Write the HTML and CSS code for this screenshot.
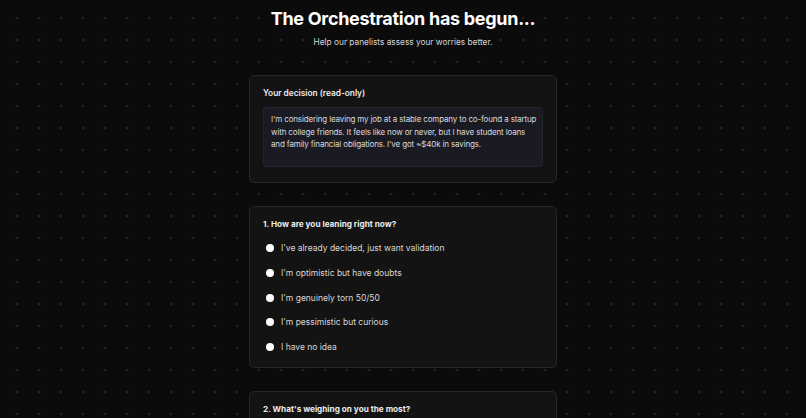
FILE: index.html
```html
<!DOCTYPE html>
<html lang="en">
<head>
<meta charset="utf-8">
<title>The Orchestration has begun…</title>
<link rel="stylesheet" href="styles.css">
</head>
<body>
<main class="page">
  <header class="hero">
    <h1 class="title">The Orchestration has begun...</h1>
    <p class="subtitle">Help our panelists assess your worries better.</p>
  </header>

  <section class="card">
    <h2 class="label">Your decision (read-only)</h2>
    <div class="readonly">I'm considering leaving my job at a stable company to co-found a startup<br>with college friends. It feels like now or never, but I have student loans<br>and family financial obligations. I've got ~$40k in savings.</div>
  </section>

  <section class="card">
    <h2 class="question">1. How are you leaning right now?</h2>
    <ul class="options">
      <li class="option"><span class="radio"></span><span>I've already decided, just want validation</span></li>
      <li class="option"><span class="radio"></span><span>I'm optimistic but have doubts</span></li>
      <li class="option"><span class="radio"></span><span>I'm genuinely torn 50/50</span></li>
      <li class="option"><span class="radio"></span><span>I'm pessimistic but curious</span></li>
      <li class="option"><span class="radio"></span><span>I have no idea</span></li>
    </ul>
  </section>

  <section class="card card-tail">
    <h2 class="question">2. What's weighing on you the most?</h2>
  </section>
</main>
</body>
</html>
```

FILE: styles.css
```css
* { box-sizing: border-box; }

html, body {
  margin: 0;
  padding: 0;
}

body {
  background-color: #0b0b0b;
  background-image: radial-gradient(circle at 11px 11px, #252525 0 1px, transparent 1.6px);
  background-size: 22px 22px;
  background-position: 6px 7px;
  color: #e6e6e6;
  font-family: Inter, "Noto Sans", "Liberation Sans", sans-serif;
  height: 418px;
  overflow: hidden;
}

.page {
  width: 308px;
  margin: 0 auto;
  display: flex;
  flex-direction: column;
  gap: 23px;
}

.hero {
  text-align: center;
  padding-top: 7px;
  margin-bottom: 4px;
  width: 500px;
  align-self: center;
}

.title {
  margin: 0;
  font-size: 18px;
  line-height: 24px;
  font-weight: 700;
  color: #ffffff;
  letter-spacing: -0.3px;
}

.subtitle {
  margin: 5px 0 0;
  font-size: 8.3px;
  line-height: 12px;
  color: #d6d6d6;
}

.card {
  background: #131313;
  border: 1px solid #272727;
  border-radius: 5px;
  padding: 11px 13px 15px;
}

.card-tail {
  padding-bottom: 40px;
}

.label {
  margin: 0 0 8px;
  font-size: 8.3px;
  line-height: 12px;
  font-weight: 600;
  color: #ececec;
}

.readonly {
  background: #1a1a22;
  border: 1px solid #24242c;
  border-radius: 3px;
  padding: 5px 2px 5px 7px;
  height: 60px;
  font-size: 8px;
  line-height: 12.5px;
  letter-spacing: -0.15px;
  color: #dadade;
}

.question {
  margin: 0 0 6px;
  font-size: 8.2px;
  line-height: 12px;
  font-weight: 700;
  color: #ececec;
}

.options {
  list-style: none;
  margin: 0;
  padding: 0;
}

.card:has(.options) {
  padding-bottom: 8px;
}

.option {
  display: flex;
  align-items: center;
  gap: 7px;
  height: 24.7px;
  padding-left: 3px;
  font-size: 8.5px;
  color: #d8d8d8;
}

.radio {
  width: 8px;
  height: 8px;
  border-radius: 50%;
  background: #ffffff;
  flex: none;
}
```
